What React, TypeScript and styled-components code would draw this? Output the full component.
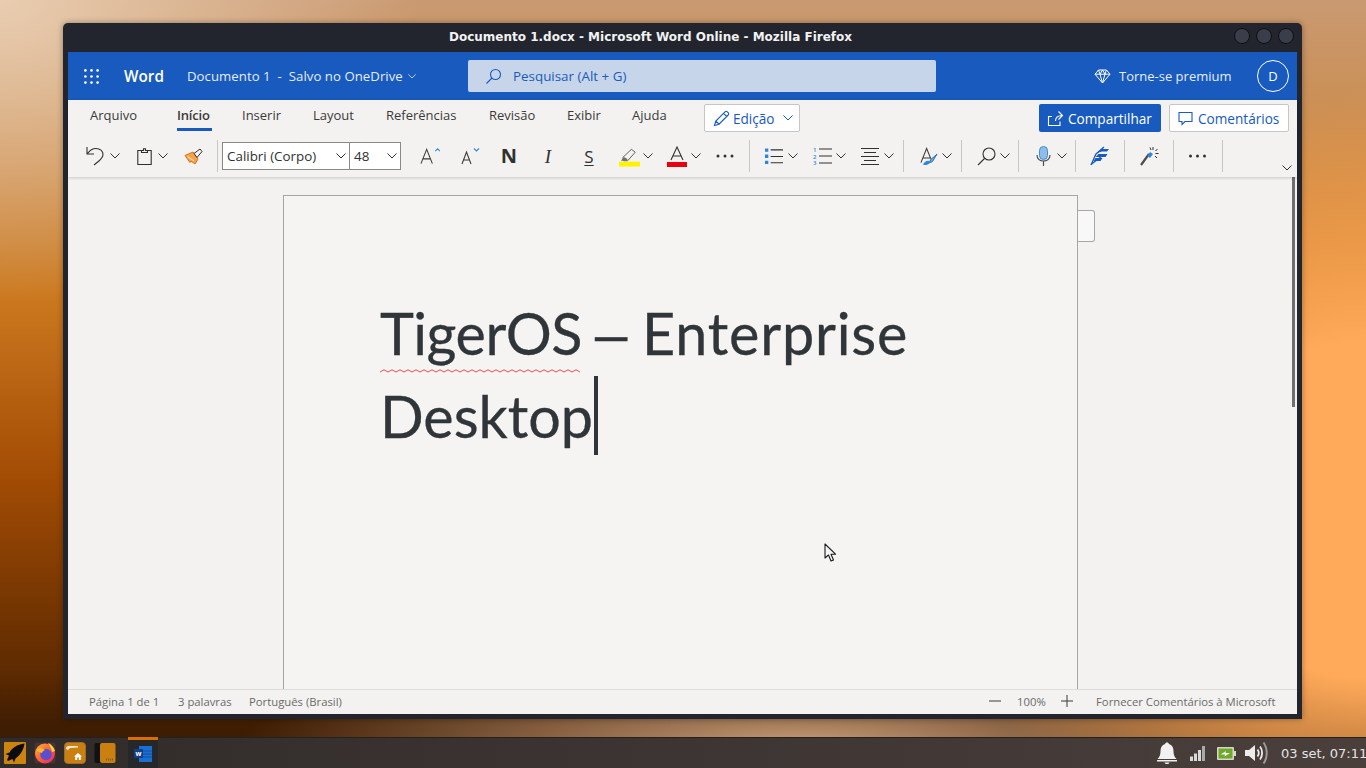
import React from 'react';
import styled, { createGlobalStyle } from 'styled-components';

const Global = createGlobalStyle`
  html, body { margin: 0; padding: 0; width: 1366px; height: 768px; overflow: hidden; }
  * { box-sizing: border-box; }
`;

const UI = `"Open Sans", "Noto Sans", sans-serif`;

const Screen = styled.div`
  width: 1366px; height: 768px; display: flex; flex-direction: column; overflow: hidden;
  background:
    radial-gradient(ellipse 420px 300px at 0px 0px, #e9cdb0 0%, rgba(233,205,176,0) 100%),
    radial-gradient(ellipse 420px 420px at 1366px 510px, #ffaa5a 0%, #ffaa5a 40%, rgba(255,170,90,0) 100%),
    radial-gradient(ellipse 560px 90px at 800px 745px, #c79c78 0%, rgba(199,156,120,0) 100%),
    linear-gradient(180deg, rgba(0,0,0,0) 88%, rgba(50,25,5,.5) 95%),
    linear-gradient(180deg, #c99a72 0%, #cc7a20 38%, #a34c04 62%, #3c1a00 100%);
`;
const Desktop = styled.div`
  height: 737px; padding: 23px 64px 18px 63px; display: flex;
`;
const Win = styled.div`
  width: 1239px; height: 696px; background: #22252e; border-radius: 5px 5px 0 0; padding: 0 5px 5px;
  display: flex; flex-direction: column; box-shadow: 0 0 6px rgba(0,0,0,.35);
`;
const TitleBar = styled.div`
  height: 29px; flex: none; display: flex; align-items: center; justify-content: center; position: relative;
  font: 700 12px "DejaVu Sans", sans-serif; color: #f2f2f2; padding: 0 64px 2px 0;
`;
const WinButtons = styled.div`
  position: absolute; right: 3px; top: 5px; display: flex; gap: 6px;
`;
const WinButton = styled.span`
  width: 16px; height: 16px; border-radius: 50%; background: #3a3e4a; border: 1px solid #0e0f13;
`;
const Body = styled.div`
  flex: 1; min-height: 0; display: flex; flex-direction: column; background: #f3f2f1; font-family: ${UI}; color: #323130;
`;
const Header = styled.div`
  height: 48px; flex: none; background: #185abd; color: #fff; display: flex; align-items: center; padding-left: 16px;
`;
const Waffle = styled.svg`width: 15px; height: 15px; flex: none;`;
const AppName = styled.span`
  font-size: 15.3px; font-weight: 600; margin-left: 25px; width: 63px; color: #fff;
`;
const DocName = styled.span`
  font-size: 13.2px; display: flex; align-items: center; gap: 5px; width: 281px; color: #e6edf8; white-space: pre;
  letter-spacing: .04px;
`;
const SearchBox = styled.div`
  width: 468px; height: 32px; border-radius: 2px; background: #c6d5ea; color: #1b5bb9; font-size: 13.4px;
  display: flex; align-items: center; gap: 11px; padding-left: 17px;
`;
const Premium = styled.div`
  margin-left: 158px; width: 163px; display: flex; align-items: center; gap: 8px; font-size: 13px; color: #e6edf8;
`;
const Avatar = styled.div`
  width: 32px; height: 32px; border-radius: 50%; border: 1px solid #fff; display: flex; align-items: center; justify-content: center;
  font-size: 13px; color: #fff;
`;
const Ribbon = styled.div`
  height: 77px; flex: none; position: relative; z-index: 1; box-shadow: 0 1px 3px rgba(0,0,0,.18); background: #f3f2f1;
  display: flex; flex-direction: column;
`;
const TabRow = styled.div`
  height: 40px; flex: none; display: flex; align-items: flex-start; padding-left: 22px;
`;
const Tab = styled.div<{ $active?: boolean; $w: number }>`
  width: ${p => p.$w}px; flex: none; height: 31px; padding-top: 6px; font-size: 13px; line-height: 18px; white-space: nowrap;
  color: #3b3a39; position: relative;
  ${p => p.$active ? `&::after{content:"";position:absolute;left:0;top:28px;width:35px;height:3px;background:#185abd;}font-weight:600;letter-spacing:-.2px;` : ''}
`;
const EditMode = styled.button`
  margin: 4px 0 0 0; width: 96px; height: 28px; background: #fff; border: 1px solid #c8c6c4; border-radius: 2px; color: #185abd;
  font: 13.6px ${UI}; display: flex; align-items: center; gap: 3px; padding: 0 0 0 8px;
`;
const ShareBtn = styled.button`
  margin: 4px 0 0 239px; width: 122px; height: 28px; background: #185abd; border: 0; border-radius: 2px; color: #fff;
  font: 13.6px ${UI}; display: flex; align-items: center; gap: 4px; padding: 0 0 0 8px; white-space: nowrap;
`;
const CommentBtn = styled.button`
  margin: 4px 0 0 8px; width: 120px; height: 28px; background: #fff; border: 1px solid #c8c6c4; border-radius: 2px; color: #185abd;
  font: 13.6px ${UI}; display: flex; align-items: center; gap: 5px; padding: 0 0 0 8px; white-space: nowrap;
`;
const ToolRow = styled.div`
  height: 32px; flex: none; display: flex; align-items: center; position: relative;
`;
const Tool = styled.span<{ $x?: number; $w: number }>`
  flex: none; width: ${p => p.$w}px; margin-left: ${p => p.$x || 0}px; height: 32px; display: flex; align-items: center; justify-content: center;
`;
const Sep = styled.span<{ $x: number }>`
  flex: none; width: 1px; height: 32px; margin-left: ${p => p.$x}px; background: #c8c6c4;
`;
const FontBox = styled.div<{ $w: number; $x?: number }>`
  flex: none; width: ${p => p.$w}px; margin-left: ${p => p.$x || 0}px; height: 28px; background: #fff; border: 1px solid #8a8886;
  display: flex; align-items: center; justify-content: space-between; padding: 0 3px 0 4px; font-size: 13.4px; color: #323130;
`;
const GlyphBold = styled.span`font: 700 20px ${UI}; color: #323130; line-height: 1;`;
const GlyphItalic = styled.span`font: italic 400 19px "Liberation Serif", serif; color: #323130; line-height: 1;`;
const GlyphUnder = styled.span`font: 400 17px ${UI}; color: #323130; line-height: 1; text-decoration: underline; text-underline-offset: 2px;`;
const Collapse = styled.span`
  position: absolute; right: 5px; bottom: 1px; display: flex;
`;
const Workspace = styled.div`
  flex: 1; min-height: 0; position: relative; overflow: hidden; background: #f3f2f1; padding: 18px 0 0 215px;
`;
const Page = styled.div`
  width: 795px; height: 520px; background: #f5f4f3; border: 1px solid #a6a6a6; padding: 95px 0 0 96px; position: relative;
  font-family: Lato, sans-serif;
`;
const DocLine = styled.div`
  font-size: 57.5px; line-height: 83px; height: 83px; color: #2f3538; white-space: pre; display: flex; -webkit-text-stroke: .3px #2f3538;
`;
const DocWord = styled.span<{ $track: number; $gap: number }>`
  letter-spacing: ${p => p.$track}px; margin-right: ${p => p.$gap}px;
`;
const DocDash = styled.span`
  display: inline-block; transform: scaleX(1.4); width: 34px; text-align: center; margin-right: 14px; position: relative; top: 1px;
`;
const Squiggle = styled.svg`
  position: absolute; left: 96px; top: 173px;
`;
const Caret = styled.span`
  display: inline-block; width: 4px; height: 79px; background: #2f3538; margin: 2px 0 0 1px;
`;
const SideTab = styled.div`
  position: absolute; left: 1010px; top: 33px; width: 17px; height: 32px; background: #f8f8f8; border: 1px solid #a6a6a6; border-left: 0;
  border-radius: 0 3px 3px 0;
`;
const ScrollThumb = styled.div`
  position: absolute; right: 2px; top: 0; width: 3px; height: 230px; background: #6f6f6f;
`;
const Pointer = styled.svg`
  position: absolute; left: 756px; top: 366px;
`;
const Status = styled.div`
  height: 25px; flex: none; border-top: 1px solid #dcdcdc; background: #f3f2f1; display: flex; align-items: center; padding: 0 0 2px 21px;
  font-size: 11.3px; color: #6b6a69; position: relative; z-index: 1;
`;
const StatusItem = styled.span<{ $w: number }>`
  flex: none; width: ${p => p.$w}px; white-space: nowrap; display: flex; align-items: center;
`;
const Taskbar = styled.div`
  height: 31px; flex: none; display: flex; align-items: center; padding-left: 4px; border-top: 1px solid #26201e;
  background: linear-gradient(90deg, #302b29 0%, #3a3331 40%, #4a3f3b 100%);
`;
const TaskIcon = styled.span<{ $x?: number }>`
  flex: none; width: 22px; height: 22px; margin-left: ${p => p.$x || 0}px; display: flex;
`;
const ActiveTask = styled.span`
  flex: none; width: 30px; height: 31px; margin: -1px 0 0 12px; border-top: 3px solid #d96f00; background: #26272b;
  display: flex; align-items: center; justify-content: center;
`;
const Tray = styled.div`
  margin-left: auto; display: flex; align-items: center; height: 100%;
`;
const TraySpace = styled.span<{ $w: number }>`
  flex: none; width: ${p => p.$w}px;
`;
const Clock = styled.span`
  font: 13px "DejaVu Sans", sans-serif; color: #e4e4e4; margin-left: 13px; white-space: nowrap; width: 85px;
`;
const EditChev = styled.span`margin-left: 5px; display: flex;`;

const Chev = ({ c = '#323130', w = 10 }: { c?: string; w?: number }) => (
  <svg width={w} height={w * .6} viewBox="0 0 10 6" fill="none" stroke={c} strokeWidth="1"><path d="M.5.5 5 5 9.5.5" /></svg>
);
const Dots = ({ w = 18 }: { w?: number }) => (
  <svg width={w} height="4" viewBox="0 0 18 4" fill="#323130"><circle cx="2" cy="2" r="1.5" /><circle cx="9" cy="2" r="1.5" /><circle cx="16" cy="2" r="1.5" /></svg>
);

export default function App() {
  return (
    <Screen>
      <Global />
      <Desktop>
        <Win>
          <TitleBar>
            Documento 1.docx - Microsoft Word Online - Mozilla Firefox
            <WinButtons><WinButton /><WinButton /><WinButton /></WinButtons>
          </TitleBar>
          <Body>
            <Header>
              <Waffle viewBox="0 0 16 16" fill="#fff">
                {[1.5, 8, 14.5].flatMap(y => [1.5, 8, 14.5].map(x => <circle key={`${x}-${y}`} cx={x} cy={y} r="1.4" />))}
              </Waffle>
              <AppName>Word</AppName>
              <DocName>
                {'Documento 1  -  Salvo no OneDrive'}
                <Chev c="#e6edf8" w={8} />
              </DocName>
              <SearchBox>
                <svg width="17" height="17" viewBox="0 0 17 17" fill="none" stroke="#185abd" strokeWidth="1.1"><circle cx="10.5" cy="6.5" r="5" /><path d="M7 10 1.5 15.5" /></svg>
                Pesquisar (Alt + G)
              </SearchBox>
              <Premium>
                <svg width="17" height="15" viewBox="0 0 17 15" fill="none" stroke="#fff" strokeWidth="1"><path d="M4.5 1h8L16 5.2 8.5 14 1 5.2zM1 5.2h15M6 5.2 8.5 14 11 5.2 8.5 1 6 5.2zM4.500 1 6 5.2M12.5 1 11 5.2" /></svg>
                Torne-se premium
              </Premium>
              <Avatar>D</Avatar>
            </Header>
            <Ribbon>
              <TabRow>
                <Tab $w={87}>Arquivo</Tab>
                <Tab $w={65} $active>Início</Tab>
                <Tab $w={71}>Inserir</Tab>
                <Tab $w={73}>Layout</Tab>
                <Tab $w={103}>Referências</Tab>
                <Tab $w={78}>Revisão</Tab>
                <Tab $w={65}>Exibir</Tab>
                <Tab $w={72}>Ajuda</Tab>
                <EditMode>
                  <svg width="17" height="17" viewBox="0 0 17 17" fill="none" stroke="#185abd" strokeWidth="1.1"><path d="M1.5 15.500 2.8 11 12 1.8a1.6 1.6 0 0 1 2.3 0l.9.9a1.6 1.6 0 0 1 0 2.3L6 14.200zM2.8 11 6 14.200M10.500 3.300l3.200 3.200" /></svg>
                  Edição
                  <EditChev><Chev c="#185abd" /></EditChev>
                </EditMode>
                <ShareBtn>
                  <svg width="17" height="17" viewBox="0 0 17 17" fill="none" stroke="#fff" strokeWidth="1.1"><path d="M5 6.500H1.500v9H13v-4M8.500 11c0-3.500 2-5.500 7-5.500M11.500 1.500l4 4-4 4" /></svg>
                  Compartilhar
                </ShareBtn>
                <CommentBtn>
                  <svg width="15" height="15" viewBox="0 0 15 15" fill="none" stroke="#185abd" strokeWidth="1.1"><path d="M1 1.500h13v9H7l-3 3v-3H1z" /></svg>
                  Comentários
                </CommentBtn>
              </TabRow>
              <ToolRow>
                <Tool $x={18} $w={20}>
                  <svg width="20" height="20" viewBox="0 0 20 20" fill="none" stroke="#323130" strokeWidth="1.1"><path d="M1 1v7h7M1.500 7.500C4 4 6.500 2.500 10 2.500c4 0 7 2.500 7 6 0 2.500-1.500 4-3.500 6L8 19" /></svg>
                </Tool>
                <Tool $x={4} $w={10}><Chev /></Tool>
                <Tool $x={17} $w={15}>
                  <svg width="15" height="17" viewBox="0 0 15 17" fill="none" stroke="#323130" strokeWidth="1.1"><path d="M4.500 2.500H.8v14h13.400v-14h-3.700M4.500 4.500v-2h2V.8h2v1.700h2v2z" /></svg>
                </Tool>
                <Tool $x={6} $w={10}><Chev /></Tool>
                <Tool $x={16} $w={19}>
                  <svg width="19" height="17" viewBox="0 0 19 17" fill="none"><path d="M1 7.500 9 4l5 7-3 5-4-3-1 1.500z" fill="#f7a24b" stroke="#d9730d" strokeWidth="1" /><path d="M3.500 8.500 10 13" stroke="#fff" strokeWidth=".8" /><path d="M10 5.500 16 1l2 2.500-5 6z" fill="#f3f2f1" stroke="#323130" strokeWidth="1" /></svg>
                </Tool>
                <Sep $x={14} />
                <FontBox $x={4} $w={128}>Calibri (Corpo)<Chev /></FontBox>
                <FontBox $x={-1} $w={52}>48<Chev /></FontBox>
                <Tool $x={19} $w={20}>
                  <svg width="20" height="18" viewBox="0 0 21 18" fill="none" stroke="#3b3a39" strokeWidth="1.1"><path d="M1 17 7 2l6 15M3 12h8" /><path d="M16 4l2.500-2.500L21 4" stroke="#2b88d8" /></svg>
                </Tool>
                <Tool $x={21} $w={19}>
                  <svg width="19" height="18" viewBox="0 0 19 18" fill="none" stroke="#3b3a39" strokeWidth="1.1"><path d="M1 17 5.500 5 10 17M2.500 13h6" /><path d="M13 1.500 15.500 4 18 1.500" stroke="#2b88d8" /></svg>
                </Tool>
                <Tool $x={20} $w={18}><GlyphBold>N</GlyphBold></Tool>
                <Tool $x={23} $w={14}><GlyphItalic>I</GlyphItalic></Tool>
                <Tool $x={26} $w={16}><GlyphUnder>S</GlyphUnder></Tool>
                <Tool $x={22} $w={21}>
                  <svg width="21" height="21" viewBox="0 0 22 21" fill="none"><path d="M4 11.500 13 3l4 3-8 9H5z" fill="#f3f2f1" stroke="#5a5a5a" strokeWidth="1" /><path d="M2 15h6l1-2-4-2z" fill="#6f6f6f" /><rect x="0" y="16" width="22" height="5" fill="#fff200" /></svg>
                </Tool>
                <Tool $x={3} $w={10}><Chev /></Tool>
                <Tool $x={14} $w={20}>
                  <svg width="20" height="21" viewBox="0 0 20 21" fill="none"><path d="M4 14 10 1l6 13M6 10h8" stroke="#323130" strokeWidth="1.1" /><rect y="16" width="20" height="5" fill="#e8000d" /></svg>
                </Tool>
                <Tool $x={4} $w={10}><Chev /></Tool>
                <Tool $x={15} $w={18}><Dots /></Tool>
                <Sep $x={15} />
                <Tool $x={15} $w={18}>
                  <svg width="18" height="17" viewBox="0 0 19 17"><path d="M0 0h3.500v3.500H0zM0 6.500h3.500V10H0zM0 13h3.500v3.500H0z" fill="#2b88d8" /><path d="M6 1.500h13M6 8.500h13M6 15h13" stroke="#323130" strokeWidth="1.1" /></svg>
                </Tool>
                <Tool $x={5} $w={10}><Chev /></Tool>
                <Tool $x={15} $w={19}>
                  <svg width="19" height="21" viewBox="0 0 19 21"><text x="0" y="6" fontSize="6" fontWeight="600" fontFamily="Open Sans" fill="#2b88d8">1</text><text x="0" y="12.500" fontSize="6" fontWeight="600" fontFamily="Open Sans" fill="#2b88d8">2</text><text x="0" y="19" fontSize="6" fontWeight="600" fontFamily="Open Sans" fill="#2b88d8">3</text><path d="M6 3h13M6 10h13M6 17h13" stroke="#323130" strokeWidth="1.1" /></svg>
                </Tool>
                <Tool $x={4} $w={10}><Chev /></Tool>
                <Tool $x={15} $w={18}>
                  <svg width="18" height="17" viewBox="0 0 18 17" stroke="#323130" strokeWidth="1.1"><path d="M0 .5h18M3 4.500h12M0 8.500h18M3 12.500h12M0 16.500h18" /></svg>
                </Tool>
                <Tool $x={5} $w={10}><Chev /></Tool>
                <Sep $x={9} />
                <Tool $x={16} $w={18}>
                  <svg width="18" height="19" viewBox="0 0 19 19" fill="none"><path d="M1 16 7 1l4.500 11M3 11h8" stroke="#3b3a39" strokeWidth="1.1" /><path d="M18 7l-7 6-1 3 3-1z" fill="#6aa9e0" stroke="#2b6cb8" /><path d="M3 18c2 .7 5 .7 8-2l-2-2c-3 0-5 2-6 4z" fill="#2b88d8" /></svg>
                </Tool>
                <Tool $x={4} $w={10}><Chev /></Tool>
                <Sep $x={9} />
                <Tool $x={15} $w={19}>
                  <svg width="19" height="19" viewBox="0 0 19 19" fill="none" stroke="#323130" strokeWidth="1.1"><circle cx="12" cy="7" r="6" /><path d="M7.500 11.500 1 18" /></svg>
                </Tool>
                <Tool $x={4} $w={10}><Chev /></Tool>
                <Sep $x={8} />
                <Tool $x={17} $w={15}>
                  <svg width="15" height="20" viewBox="0 0 15 20" fill="none"><rect x="3.500" y=".5" width="8" height="13" rx="4" fill="#8dbde8" stroke="#3d8ed6" /><path d="M1 9c0 4 3 6 6.500 6S14 13 14 9M7.500 15v5" stroke="#4d4d4d" strokeWidth="1.200" /></svg>
                </Tool>
                <Tool $x={6} $w={10}><Chev /></Tool>
                <Sep $x={8} />
                <Tool $x={14} $w={20}>
                  <svg width="20" height="20" viewBox="0 0 20 20" fill="none"><path d="M1 19 6 8l8-7" stroke="#185abd" strokeWidth="1.300" /><path d="M7 7 12 3h7l-2 2.500h-5M5.500 11l3-3h9l-2 3zM3.500 15l2-3h7l-2 3z" fill="#185abd" /><path d="M1 18.500 12 10" stroke="#185abd" strokeWidth="1.300" /></svg>
                </Tool>
                <Sep $x={14} />
                <Tool $x={15} $w={19}>
                  <svg width="19" height="20" viewBox="0 0 19 20" fill="none"><path d="M1 19 9 8" stroke="#4d4d4d" strokeWidth="2.200" /><path d="M7.500 10 10 6l3 2-3 4z" fill="#2b88d8" /><path d="M13 1v3M17.500 3l-2 2M18.500 7.500h-3M17 12l-2-2M10 1.500l1 2.500" stroke="#323130" strokeWidth="1" /></svg>
                </Tool>
                <Sep $x={14} />
                <Tool $x={14} $w={19}><Dots w={19} /></Tool>
                <Sep $x={15} />
                <Collapse><Chev /></Collapse>
              </ToolRow>
            </Ribbon>
            <Workspace>
              <Page>
                <DocLine>
                  <DocWord $track={-.5} $gap={12}>TigerOS</DocWord>
                  <DocDash>–</DocDash>
                  <DocWord $track={.8} $gap={0}>Enterprise</DocWord>
                </DocLine>
                <DocLine>Desktop<Caret /></DocLine>
                <Squiggle width="201" height="4" viewBox="0 0 201 4" fill="none" stroke="#ee4a50" strokeWidth="1">
                  <path d={Array.from({ length: 51 }, (_, i) => `${i === 0 ? 'M' : 'L'}${i * 4} ${i % 2 ? 0.8 : 3}`).join(' ')} />
                </Squiggle>
              </Page>
              <SideTab />
              <ScrollThumb />
              <Pointer width="13" height="20" viewBox="0 0 13 20" fill="#f5f5f5" stroke="#1a1a1a" strokeWidth="1.1" strokeLinejoin="round">
                <path d="M1 1v14l3.500-3 2.500 6 2.500-1-2.500-5.800H11.500z" />
              </Pointer>
            </Workspace>
            <Status>
              <StatusItem $w={89}>Página 1 de 1</StatusItem>
              <StatusItem $w={71}>3 palavras</StatusItem>
              <StatusItem $w={740}>Português (Brasil)</StatusItem>
              <StatusItem $w={28}><svg width="12" height="2"><path d="M0 1h12" stroke="#3b3a39" /></svg></StatusItem>
              <StatusItem $w={44}>100%</StatusItem>
              <StatusItem $w={35}><svg width="12" height="12"><path d="M0 6h12M6 0v12" stroke="#3b3a39" /></svg></StatusItem>
              <StatusItem $w={190}>Fornecer Comentários à Microsoft</StatusItem>
            </Status>
          </Body>
        </Win>
      </Desktop>
      <Taskbar>
        <TaskIcon>
          <svg width="22" height="22" viewBox="0 0 22 22"><rect width="22" height="22" rx="1" fill="#cc8410" /><path d="M20.500 1.500C13 2.500 8 6 5.500 10.500L1.500 12l3.500 1.500L3 18l1 1 4.500-2L10 20.500l1.500-4C15.500 13.500 19.500 9 20.500 1.500z" fill="#0c0c0c" /></svg>
        </TaskIcon>
        <TaskIcon $x={8}>
          <svg width="22" height="22" viewBox="0 0 22 22"><defs><linearGradient id="ff" x1="0" y1="0" x2="1" y2="1"><stop offset="0" stopColor="#ffb72b" /><stop offset=".55" stopColor="#ff5a36" /><stop offset="1" stopColor="#e3216f" /></linearGradient></defs><rect x=".5" y=".5" width="21" height="21" rx="3" fill="#4a3338" /><circle cx="11" cy="11.500" r="10" fill="url(#ff)" /><circle cx="12" cy="12.500" r="5.800" fill="#5b4fd0" /><path d="M3 7c3-2 5-1 8 1-2 1-3 2-3 3L3 9z" fill="#ffb72b" /><path d="M14 1c3 1 6 4 7 8l-3 1c-.5-3-2-6-4-9z" fill="#ffd13f" /></svg>
        </TaskIcon>
        <TaskIcon $x={8}>
          <svg width="22" height="22" viewBox="0 0 22 22"><rect x=".5" y=".5" width="21" height="21" rx="3.500" fill="#c9800f" stroke="#9c6a3a" /><path d="M2 7c0-2 1-3 3-3h9v1.500L6 6 4 8z" fill="#f2e6d3" /><path d="M14 11l4 3.500h-1.200V18h-2v-2.500h-1.600V18h-2v-3.500H10z" fill="#fff" /></svg>
        </TaskIcon>
        <TaskIcon $x={8}>
          <svg width="22" height="22" viewBox="0 0 22 22"><rect x=".5" y="1" width="8" height="20" rx="2" fill="#111" /><rect x="6" y="1" width="15.500" height="20" rx="2" fill="#c9800f" /><path d="M12 17.500h7" stroke="#7a5a30" strokeWidth="2" strokeDasharray="1 1" /></svg>
        </TaskIcon>
        <ActiveTask>
          <svg width="18" height="16" viewBox="0 0 18 16"><rect x="5" y="0" width="13" height="16" fill="#1b6fd0" /><path d="M5 5h13M5 8h13M5 11h13" stroke="#0f4fa8" /><rect x="0" y="3" width="9" height="9" fill="#143f84" /><text x="1.500" y="10" fontSize="7" fontWeight="700" fontFamily="Open Sans" fill="#fff">w</text></svg>
        </ActiveTask>
        <Tray>
          <svg width="20" height="24" viewBox="0 0 20 24" fill="#f1f1f1"><path d="M10 1.500c1 0 1.800.6 2 1.600 3 1 4.500 3.500 4.500 7 0 4 1 6 3 8H.5c2-2 3-4 3-8 0-3.500 1.500-6 4.500-7 .2-1 1-1.600 2-1.600z" /><path d="M0 19h20v1.500H0zM7.500 21.500h5c-.3 1-1.300 1.500-2.500 1.500s-2.200-.5-2.500-1.500z" /></svg>
          <TraySpace $w={13} />
          <svg width="15" height="15" viewBox="0 0 15 15" fill="#d9d9d9"><rect x="0" y="10.500" width="3" height="4.500" /><rect x="4" y="7.500" width="3" height="7.500" /><rect x="8" y="4" width="3" height="11" /><rect x="12" y="0" width="3" height="15" fill="#a9a9a9" /></svg>
          <TraySpace $w={12} />
          <svg width="19" height="13" viewBox="0 0 19 13"><rect x="0" y="0" width="17" height="13" rx="1" fill="#d8d8c8" /><rect x="1.500" y="1.500" width="14" height="10" fill="#6fa92b" /><rect x="17" y="4" width="2" height="5" fill="#d8d8c8" /><path d="M3.500 7.500 9 4 8.500 6H13L7.500 9.500 8 7.500z" fill="#f0f0f0" /></svg>
          <TraySpace $w={9} />
          <svg width="23" height="24" viewBox="0 0 23 24" fill="none"><path d="M0 9h4l6-5v16l-6-5H0z" fill="#ececec" /><path d="M12.500 8.500c1.500 2 1.500 5 0 7" stroke="#ececec" strokeWidth="1.800" /><path d="M15 5.500c2.800 3.500 2.800 9.500 0 13" stroke="#ececec" strokeWidth="1.800" /><path d="M18.500 1.500c4.300 6 4.300 15 0 21" stroke="#9a9a9a" strokeWidth="2" /></svg>
          <Clock>03 set, 07:11</Clock>
        </Tray>
      </Taskbar>
    </Screen>
  );
}
